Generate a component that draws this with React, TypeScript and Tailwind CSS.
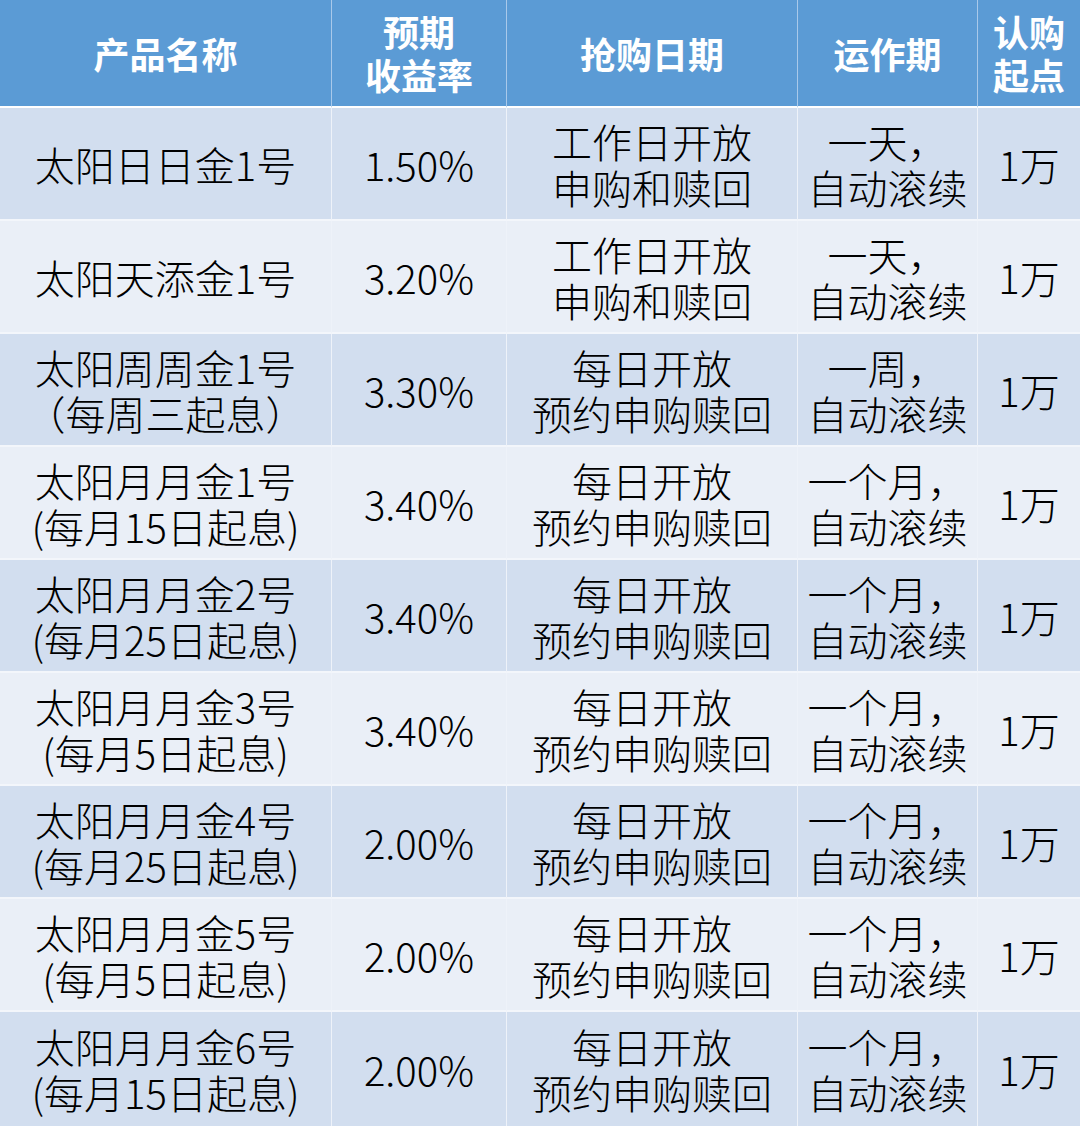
const headers = [
  ["产品名称"],
  ["预期", "收益率"],
  ["抢购日期"],
  ["运作期"],
  ["认购", "起点"],
];

const DAILY = ["工作日开放", "申购和赎回"];
const OPEN = ["每日开放", "预约申购赎回"];
const MONTH = ["一个月，", "自动滚续"];

const rows: string[][][] = [
  [["太阳日日金1号"], ["1.50%"], DAILY, ["一天，", "自动滚续"], ["1万"]],
  [["太阳天添金1号"], ["3.20%"], DAILY, ["一天，", "自动滚续"], ["1万"]],
  [["太阳周周金1号", "（每周三起息）"], ["3.30%"], OPEN, ["一周，", "自动滚续"], ["1万"]],
  [["太阳月月金1号", "(每月15日起息)"], ["3.40%"], OPEN, MONTH, ["1万"]],
  [["太阳月月金2号", "(每月25日起息)"], ["3.40%"], OPEN, MONTH, ["1万"]],
  [["太阳月月金3号", "(每月5日起息)"], ["3.40%"], OPEN, MONTH, ["1万"]],
  [["太阳月月金4号", "(每月25日起息)"], ["2.00%"], OPEN, MONTH, ["1万"]],
  [["太阳月月金5号", "(每月5日起息)"], ["2.00%"], OPEN, MONTH, ["1万"]],
  [["太阳月月金6号", "(每月15日起息)"], ["2.00%"], OPEN, MONTH, ["1万"]],
];

const font = { fontFamily: '"Noto Sans CJK SC", "Noto Sans", sans-serif' };

export default function App() {
  return (
    <div className="w-[1080px] bg-white" style={font}>
      <div className="grid grid-cols-[332px_175px_291px_180px_102px]">
        {headers.map((h, i) => (
          <div
            key={i}
            className={`h-[108px] bg-[#5b9bd5] border-b-2 border-white flex flex-col items-center justify-center text-white font-bold text-[36px] leading-[43px] ${
              i < 4 ? "border-r border-r-[#a9c9ea]" : ""
            }`}
          >
            {h.map((l, j) => (
              <div key={j} className="whitespace-nowrap">{l}</div>
            ))}
          </div>
        ))}
        {rows.map((r, ri) =>
          r.map((c, ci) => (
            <div
              key={ri + "-" + ci}
              className={`${ri === rows.length - 1 ? "h-[114px]" : "h-[113px] border-b-2 border-b-[#f3f6fb]"} ${
                ri % 2 === 0 ? "bg-[#d2deef]" : "bg-[#eaeff7]"
              } ${ci < 4 ? "border-r border-r-[#eef2f9]" : ""} flex flex-col items-center justify-center text-black font-light text-[40px] leading-[46px]`}
            >
              {c.map((l, j) => (
                <div key={j} className="whitespace-nowrap">{l}</div>
              ))}
            </div>
          ))
        )}
      </div>
    </div>
  );
}
